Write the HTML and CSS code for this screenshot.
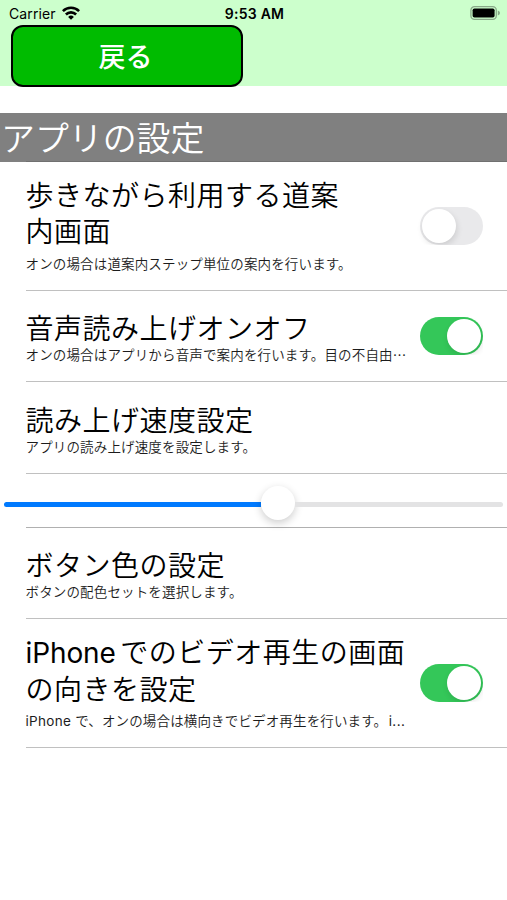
FILE: index.html
```
<!DOCTYPE html>
<html lang="ja">
<head>
<meta charset="utf-8">
<meta name="viewport" content="width=device-width">
<title>アプリの設定</title>
<link rel="stylesheet" href="styles.css">
</head>
<body>
<header class="top">
  <div class="status">
    <div class="carrier"><span>Carrier</span>
      <svg class="wifi" width="18" height="14" viewBox="0 0 18 14"><g fill="none" stroke="#000" stroke-width="2.6"><path d="M0.9 5.1a11.5 11.5 0 0 1 16.2 0"/><path d="M3.9 8.5a7.2 7.2 0 0 1 10.2 0"/></g><path d="M9 13.8L6.1 10.9a4.1 4.1 0 0 1 5.8 0z"/></svg>
    </div>
    <span class="time">9:53 AM</span>
    <svg class="battery" width="31" height="14" viewBox="0 0 31 14"><rect x=".9" y=".7" width="25.4" height="12.6" rx="3.6" fill="none" stroke="#88a988" stroke-width="1.3"/><rect x="2.6" y="2.5" width="22" height="9" rx="1.8"/><path d="M27.8 4.6q2.2.7 2.2 2.4t-2.2 2.4z" fill="#88a988"/></svg>
  </div>
  <button class="back">戻る</button>
</header>
<main>
  <h1 class="section">アプリの設定</h1>
  <section class="row row-walk">
    <div class="text"><h2>歩きながら利用する道案<br>内画面</h2><p>オンの場合は道案内ステップ単位の案内を行います。</p></div>
    <span class="switch"></span>
  </section>
  <section class="row">
    <div class="text"><h2>音声読み上げオンオフ</h2><p>オンの場合はアプリから音声で案内を行います。目の不自由<span class="dots">⋯</span></p></div>
    <span class="switch on"></span>
  </section>
  <section class="row row-speed">
    <div class="text"><h2>読み上げ速度設定</h2><p>アプリの読み上げ速度を設定します。</p></div>
  </section>
  <section class="slider-row"><div class="fill"></div><div class="knob"></div><div class="rest"></div></section>
  <section class="row">
    <div class="text"><h2>ボタン色の設定</h2><p>ボタンの配色セットを選択します。</p></div>
  </section>
  <section class="row row-video">
    <div class="text"><h2><span class="latin">iPhone</span>でのビデオ再生の画面<br>の向きを設定</h2><p><span class="latin">iPhone</span>で、オンの場合は横向きでビデオ再生を行います。<span class="tail">i...</span></p></div>
    <span class="switch on"></span>
  </section>
</main>
</body>
</html>
```
FILE: styles.css
```
* { box-sizing: border-box; }
body {
  margin: 0;
  background: #fff;
  color: #000;
  font-family: "Noto Sans CJK JP", sans-serif;
}
h1, h2, p { margin: 0; font-weight: 350; white-space: nowrap; }
.top { height: 86px; background: #ccffcc; }
.status {
  display: grid;
  grid-template-columns: 1fr auto 1fr;
  align-items: center;
  height: 25px;
  padding: 2px 6px 0 9px;
  font: 14px/23px Inter, sans-serif;
}
.carrier { display: flex; align-items: center; gap: 6px; letter-spacing: .1px; }
.wifi { margin-top: -2px; }
.time { font-weight: 600; letter-spacing: .25px; margin-left: -1px; }
.battery { justify-self: end; margin-top: -1px; }
.back {
  display: block;
  width: 232px;
  height: 62px;
  margin-left: 11px;
  padding: 0 3px 0 0;
  border: 2.5px solid #000;
  border-radius: 12px;
  background: #00bb00;
  color: #fff;
  font: 500 27px/56px "Noto Sans CJK JP", sans-serif;
}
.section {
  height: 49px;
  margin-top: 27px;
  padding-left: 1px;
  background: linear-gradient(#707070, #707070) 26px 100% / 100% 1px no-repeat #808080;
  color: #fff;
  font-size: 33.9px;
  line-height: 48px;
}
.row {
  display: flex;
  align-items: center;
  justify-content: space-between;
  height: 91.5px;
  margin-left: 26px;
  padding-right: 24px;
  border-bottom: 1.5px solid #c0c0c0;
}
.row-walk { height: 128.5px; }
.row-video { height: 128.5px; }
.text { width: 390px; }
h2 { margin-left: -.5px; font-size: 28px; line-height: 36.5px; letter-spacing: .5px; }
.row p { margin-left: -.5px; font-size: 13.5px; line-height: 18px; letter-spacing: .15px; color: #1c1c1c; }
.row-walk .text { padding-bottom: 4px; }
.row-speed .text { padding-top: 1px; }
.row-video .text { padding-bottom: 3px; }
.row-walk p, .row-video p { margin-top: 5px; }
.latin, .tail { font-family: Inter, sans-serif; font-weight: 400; line-height: 1; }
h2 .latin { margin-right: 4.5px; letter-spacing: -.1px; }
p .latin { margin-right: 4px; letter-spacing: .3px; }
p .tail { margin-left: 1.5px; letter-spacing: .4px; }
.switch {
  flex: none;
  width: 63px;
  height: 38px;
  padding: 2px;
  border-radius: 19px;
  background: #e9e9eb;
}
.switch::before {
  content: "";
  display: block;
  width: 34px;
  height: 34px;
  border-radius: 50%;
  background: #fff;
  box-shadow: 1px 3px 6px rgba(0, 0, 0, .12);
  clip-path: inset(-2px -8px -2px -8px);
}
.switch.on { background: #34c759; }
.switch.on::before { margin-left: auto; clip-path: inset(-2px -2px -2px -8px); }
.slider-row {
  display: flex;
  align-items: center;
  height: 54px;
  padding: 7px 4px 0;
  background: linear-gradient(#b0b0b0, #b0b0b0) 26px 100% / 100% 1px no-repeat;
}
.fill { width: 257px; height: 5px; border-radius: 3px 0 0 3px; background: #007aff; }
.knob {
  width: 34px;
  height: 34px;
  margin-top: -3px;
  border-radius: 50%;
  background: #fff;
  box-shadow: 0 3px 8px rgba(0, 0, 0, .2);
}
.rest { flex: 1; height: 5px; border-radius: 0 3px 3px 0; background: #e3e3e4; }
```
